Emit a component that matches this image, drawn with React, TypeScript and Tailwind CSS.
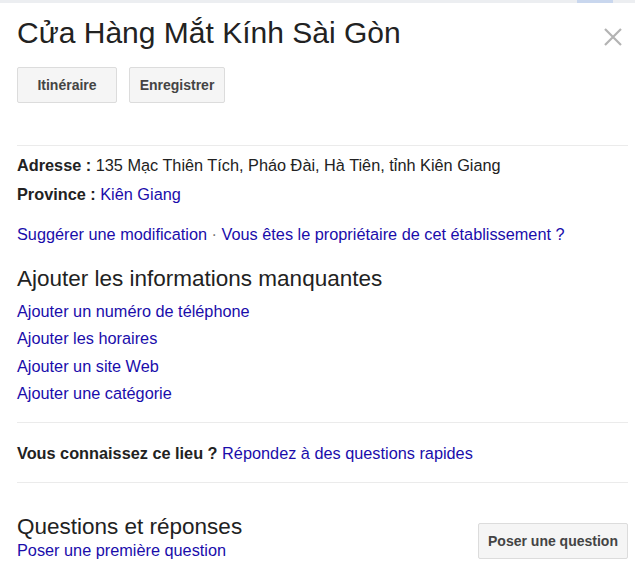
import React from "react";

const font = { fontFamily: "'Liberation Sans', Arial, sans-serif" };

function GrayButton({ children, className = "" }: { children: React.ReactNode; className?: string }) {
  return (
    <button
      className={`h-[36px] rounded-[2px] border border-[#dcdcdc] bg-[#f5f5f5] text-[14px] font-bold text-[#444] ${className}`}
    >
      {children}
    </button>
  );
}

const links = [
  "Ajouter un numéro de téléphone",
  "Ajouter les horaires",
  "Ajouter un site Web",
  "Ajouter une catégorie",
];

export default function App() {
  return (
    <div className="w-[635px] h-[581px] overflow-hidden bg-white text-[#222]" style={font}>
      {/* faint strip at top */}
      <div className="h-[3px] flex bg-[#eceef1]">
        <div className="flex-1" />
        <div className="w-[36px] bg-[#c9d7ee] mr-[22px]" />
      </div>

      <div className="pl-[17px] pr-[7px]">
        {/* Header */}
        <div className="flex items-start justify-between pt-[10px]">
          <h1 className="text-[30px] leading-[40px] text-[#222]">Cửa Hàng Mắt Kính Sài Gòn</h1>
          <svg width="18" height="18" viewBox="0 0 18 18" className="mt-[15px] mr-[6px]">
            <path d="M1 1 L17 17 M17 1 L1 17" stroke="#b3b3b3" strokeWidth="2.2" />
          </svg>
        </div>

        <div className="flex gap-[12px] mt-[14px]">
          <GrayButton className="w-[100px]">Itinéraire</GrayButton>
          <GrayButton className="w-[96px]">Enregistrer</GrayButton>
        </div>

        <div className="h-px bg-[#ebebeb] mt-[42px]" />

        {/* Details */}
        <div className="mt-[5px] text-[16.3px] leading-[29px]">
          <div>
            <span className="font-bold">Adresse : </span>
            135 Mạc Thiên Tích, Pháo Đài, Hà Tiên, tỉnh Kiên Giang
          </div>
          <div>
            <span className="font-bold">Province : </span>
            <a className="text-[#1a0dab]">Kiên Giang</a>
          </div>
        </div>

        <div className="mt-[15px] text-[16.3px] leading-[20px] text-[#1a0dab]">
          Suggérer une modification <span className="text-[#777]">·</span> Vous êtes le propriétaire de cet établissement ?
        </div>

        {/* Missing info */}
        <h2 className="mt-[22px] text-[22.5px] leading-[26px] text-[#222]">Ajouter les informations manquantes</h2>
        <div className="flex flex-col mt-[6px] text-[16.3px] leading-[27.3px] text-[#1a0dab]">
          {links.map((l) => (
            <a key={l}>{l}</a>
          ))}
        </div>

        <div className="h-px bg-[#ebebeb] mt-[15px]" />

        <div className="pt-[20px] pb-[19px] text-[16.3px] leading-[20px]">
          <span className="font-bold">Vous connaissez ce lieu ? </span>
          <a className="text-[#1a0dab]">Répondez à des questions rapides</a>
        </div>

        <div className="h-px bg-[#ebebeb]" />

        {/* Q&A */}
        <div className="flex items-start justify-between mt-[31px]">
          <div>
            <h2 className="text-[22.5px] leading-[26px] text-[#222]">Questions et réponses</h2>
            <a className="block text-[16.3px] leading-[20px] text-[#1a0dab]">Poser une première question</a>
          </div>
          <GrayButton className="w-[150px] mt-[9px]">Poser une question</GrayButton>
        </div>
      </div>
    </div>
  );
}
